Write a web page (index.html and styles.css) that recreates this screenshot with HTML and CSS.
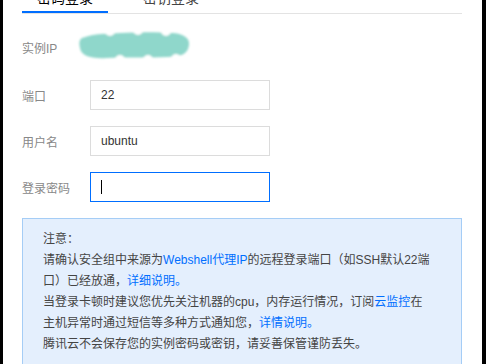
FILE: index.html
```html
<!DOCTYPE html>
<html lang="zh-CN">
<head>
<meta charset="utf-8">
<title>登录</title>
<link rel="stylesheet" href="styles.css">
</head>
<body>
<div class="page">
  <div class="tabs">
    <div class="tab active">密码登录</div>
    <div class="tab">密钥登录</div>
  </div>
  <div class="form">
    <div class="row row-ip">
      <span class="label">实例IP</span>
      <svg class="blur-ip" width="116" height="32" viewBox="0 0 116 32">
        <defs>
          <filter id="soft" x="-10%" y="-20%" width="120%" height="140%">
            <feGaussianBlur stdDeviation="0.8"/>
          </filter>
        </defs>
        <g filter="url(#soft)">
          <path d="M5 9 C18 4 30 5 44 4 C60 3 80 3 96 4 C108 5 113 10 112 16 C111 25 104 28 90 28 C70 29 50 28 30 29 C14 30 4 27 3 19 C2 14 2 11 5 9 Z" fill="#8fd7cb"/>
          <circle cx="33" cy="2" r="5" fill="#fff"/>
          <circle cx="61" cy="1" r="5" fill="#fff"/>
          <circle cx="89" cy="2" r="5" fill="#fff"/>
          <circle cx="43" cy="31" r="5" fill="#fff"/>
          <circle cx="71" cy="31" r="5" fill="#fff"/>
          <circle cx="99" cy="30" r="5" fill="#fff"/>
        </g>
      </svg>
    </div>
    <div class="row">
      <span class="label">端口</span>
      <div class="input">22</div>
    </div>
    <div class="row">
      <span class="label">用户名</span>
      <div class="input">ubuntu</div>
    </div>
    <div class="row">
      <span class="label">登录密码</span>
      <div class="input focused"><span class="caret"></span></div>
    </div>
  </div>
  <div class="notice">
    <div class="notice-body">
      <p>注意：</p>
      <p>请确认安全组中来源为<a>Webshell代理IP</a>的远程登录端口（如SSH默认22端<br>口）已经放通，<a>详细说明。</a></p>
      <p>当登录卡顿时建议您优先关注机器的cpu，内存运行情况，订阅<a>云监控</a>在<br>主机异常时通过短信等多种方式通知您，<a>详情说明。</a></p>
      <p>腾讯云不会保存您的实例密码或密钥，请妥善保管谨防丢失。</p>
    </div>
  </div>
</div>
</body>
</html>
```
FILE: styles.css
```css
html, body {
  margin: 0;
  padding: 0;
  background: #000;
  height: 100%;
  overflow: hidden;
}

.page {
  margin-left: 3px;
  width: 479px;
  height: 364px;
  box-sizing: border-box;
  padding: 0 20px 0 19px;
  background: #fff;
  overflow: hidden;
  font-family: "Liberation Sans", "Noto Sans CJK SC", sans-serif;
  color: #333;
}

.tabs {
  display: flex;
  gap: 20px;
  margin-top: -12px;
  border-bottom: 1px solid #e3e3e3;
}

.tab {
  font-size: 14px;
  line-height: 20px;
  padding: 0 15px 3px;
  border-bottom: 2px solid transparent;
  color: #444;
}

.tab.active {
  color: #000;
  border-bottom-color: #006eff;
}

.form {
  margin-top: 18px;
}

.row {
  display: flex;
  align-items: center;
  height: 30px;
  margin-bottom: 16px;
}

.row-ip {
  margin-bottom: 18px;
}

.label {
  width: 68px;
  flex: none;
  font-size: 12px;
  color: #888;
}

.blur-ip {
  display: block;
  margin-left: -13px;
  margin-top: -5px;
}

.input {
  width: 180px;
  height: 30px;
  box-sizing: border-box;
  border: 1px solid #dcdcdc;
  padding-left: 10px;
  font-size: 12px;
  line-height: 28px;
  color: #333;
  display: flex;
  align-items: center;
}

.input.focused {
  border-color: #006eff;
}

.caret {
  display: block;
  width: 1px;
  height: 14px;
  background: #000;
}

.notice {
  border: 1px solid #a5cdf6;
  background: #e4effd;
  padding: 10px 20px 10px;
}

.notice-body {
  white-space: nowrap;
  font-size: 12px;
  line-height: 21px;
  color: #444;
}

.notice-body p {
  margin: 0;
}

.notice-body a {
  color: #006eff;
  text-decoration: none;
}
```
